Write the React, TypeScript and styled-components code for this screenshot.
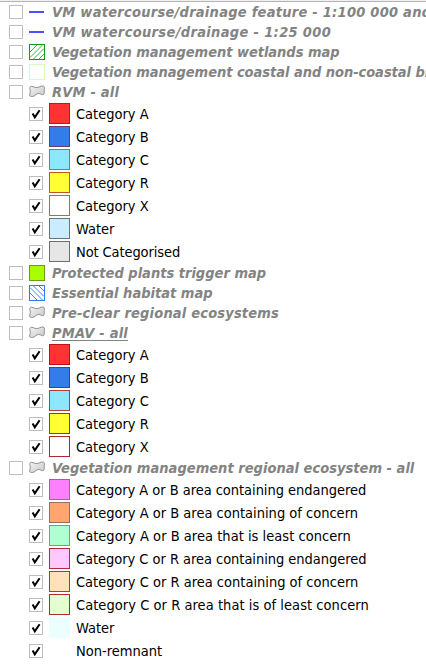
import React from "react";
import styled, { createGlobalStyle, css } from "styled-components";

const GlobalStyle = createGlobalStyle`
  body {
    margin: 0;
    background: #fff;
    overflow: hidden;
    font-family: "DejaVu Sans Condensed", "DejaVu Sans", sans-serif;
    font-stretch: condensed;
  }
`;

const Panel = styled.div`
  box-sizing: border-box;
  width: 426px;
  height: 664px;
  overflow: hidden;
  background: #fff;
`;

const TopEdge = styled.div`
  height: 1px;
  background: #f0f0f0;
  border-bottom: 1px solid #b4b4b4;
`;

const LayerRow = styled.div`
  display: flex;
  align-items: center;
  height: 20px;
  padding-left: 9px;
`;

const ClassRow = styled.div`
  display: flex;
  align-items: center;
  height: 23px;
  padding-left: 29px;
`;

const CheckBox = styled.span`
  display: flex;
  flex: none;
  box-sizing: border-box;
  width: 14px;
  height: 14px;
  margin-right: 6px;
  border: 1px solid #bdbdbd;
  background: #fff;
`;

const IconSlot = styled.span`
  display: flex;
  flex: none;
  width: 16px;
  height: 16px;
  margin-right: 7px;
`;

const Swatch = styled.span<{ $fill: string; $line: string }>`
  flex: none;
  box-sizing: border-box;
  width: 21px;
  height: 21px;
  margin-right: 6px;
  background: ${(p) => p.$fill};
  border: 1px solid ${(p) => p.$line};
`;

const LayerName = styled.span<{ $tracking: number; $underline?: boolean }>`
  font-size: 14.5px;
  font-weight: bold;
  font-style: italic;
  line-height: 20px;
  white-space: nowrap;
  color: #838383;
  letter-spacing: ${(p) => p.$tracking}px;
  ${(p) =>
    p.$underline &&
    css`
      text-decoration: underline;
      text-decoration-thickness: 1px;
      text-underline-offset: 2px;
      text-decoration-skip-ink: none;
    `}
`;

const ClassName = styled.span<{ $tracking: number }>`
  padding-top: 1px;
  font-size: 14.5px;
  line-height: 23px;
  white-space: nowrap;
  color: #000;
  letter-spacing: ${(p) => p.$tracking}px;
`;

type IconKind = "line" | "wetland" | "outline" | "polygon" | "plants" | "habitat";

function LayerIcon({ kind }: { kind: IconKind }) {
  return (
    <svg width="16" height="16" viewBox="0 0 16 16">
      {kind === "line" && <path d="M0 8H15" stroke="#4f4fff" strokeWidth="2" />}
      {kind === "wetland" && (
        <>
          <path d="M1 8L8 1M1 13.5L13.5 1M4.5 15L15 4.5M10 15L15 10" stroke="#45b045" strokeWidth="1" />
          <rect x=".5" y=".5" width="15" height="15" fill="none" stroke="#169616" />
        </>
      )}
      {kind === "outline" && <rect x=".5" y=".5" width="15" height="15" fill="#fff" stroke="#d4ffc0" />}
      {kind === "plants" && <rect x=".5" y=".5" width="15" height="15" fill="#a9ff00" stroke="#6a9c10" />}
      {kind === "habitat" && (
        <>
          <path d="M1 2.5L13.5 15M4.5 1L15 11.5M10 1L15 6M1 8L8 15" stroke="#3f86f5" strokeWidth="1" />
          <rect x=".5" y=".5" width="15" height="15" fill="none" stroke="#2f78ee" />
        </>
      )}
      {kind === "polygon" && (
        <>
          <defs>
            <linearGradient id="land" x1="0" y1="0" x2="1" y2="1">
              <stop offset="0" stopColor="#f4f4f4" />
              <stop offset="1" stopColor="#c8c8c8" />
            </linearGradient>
          </defs>
          <path
            d="M1.4 2.6C3 1.4 5.2 3.6 7.6 3.6C10 3.6 11.6 1.9 14 2C15.5 2.2 15.6 3.6 15.3 5.4C15.1 7.4 15.6 9.6 14.6 10.5C13.2 11.4 11.6 9.4 9.6 9.4C7.4 9.4 6 12.2 3.8 12.4C2 12.6 .6 12.4 .6 11C.6 9.6 1.6 8.8 1.4 7.2C1.2 5.6 .1 3.8 1.4 2.6Z"
            fill="url(#land)"
            stroke="#8f8f8f"
          />
        </>
      )}
    </svg>
  );
}

function Tick() {
  return (
    <svg width="12" height="12" viewBox="0 0 12 12">
      <path d="M2.6 5.6L4.8 9.3L9.6 2.2" fill="none" stroke="#000" strokeWidth="2" />
    </svg>
  );
}

interface Category {
  name: string;
  fill: string;
  line: string;
  tracking?: number;
}

interface Layer {
  name: string;
  icon: IconKind;
  tracking?: number;
  underline?: boolean;
  classes?: Category[];
}

const layers: Layer[] = [
  { name: "VM watercourse/drainage feature - 1:100 000 and", icon: "line", tracking: 0.25 },
  { name: "VM watercourse/drainage - 1:25 000", icon: "line", tracking: 0.33 },
  { name: "Vegetation management wetlands map", icon: "wetland", tracking: -0.04 },
  { name: "Vegetation management coastal and non-coastal bi", icon: "outline", tracking: -0.04 },
  {
    name: "RVM - all",
    icon: "polygon",
    tracking: 0.2,
    classes: [
      { name: "Category A", fill: "#ff3333", line: "#c4161c" },
      { name: "Category B", fill: "#337de8", line: "#713a68" },
      { name: "Category C", fill: "#8fe6ff", line: "#946d78" },
      { name: "Category R", fill: "#ffff33", line: "#b85c1c" },
      { name: "Category X", fill: "#ffffff", line: "#b96064" },
      { name: "Water", fill: "#c9ecff", line: "#66747c" },
      { name: "Not Categorised", fill: "#e6e6e6", line: "#6e6e6e", tracking: -0.1 },
    ],
  },
  { name: "Protected plants trigger map", icon: "plants" },
  { name: "Essential habitat map", icon: "habitat" },
  { name: "Pre-clear regional ecosystems", icon: "polygon", tracking: 0.18 },
  {
    name: "PMAV - all",
    icon: "polygon",
    underline: true,
    tracking: 0.2,
    classes: [
      { name: "Category A", fill: "#ff3333", line: "#b81418" },
      { name: "Category B", fill: "#337de8", line: "#8c2850" },
      { name: "Category C", fill: "#8fe6ff", line: "#b03c3c" },
      { name: "Category R", fill: "#ffff33", line: "#b02c1c" },
      { name: "Category X", fill: "#ffffff", line: "#b0282c" },
    ],
  },
  {
    name: "Vegetation management regional ecosystem - all",
    icon: "polygon",
    tracking: 0.02,
    classes: [
      { name: "Category A or B area containing endangered", fill: "#ff80ff", line: "#946a94", tracking: -0.04 },
      { name: "Category A or B area containing of concern", fill: "#ffa570", line: "#94705c" },
      { name: "Category A or B area that is least concern", fill: "#b0ffd2", line: "#789c88", tracking: 0.03 },
      { name: "Category C or R area containing endangered", fill: "#ffc8ff", line: "#b02c3c", tracking: -0.04 },
      { name: "Category C or R area containing of concern", fill: "#ffe1be", line: "#b83424" },
      { name: "Category C or R area that is of least concern", fill: "#e1ffcf", line: "#b02c24", tracking: 0.05 },
      { name: "Water", fill: "#ebffff", line: "#ebffff" },
      { name: "Non-remnant", fill: "#ffffff", line: "#ffffff" },
    ],
  },
];

export default function App() {
  return (
    <>
      <GlobalStyle />
      <Panel>
        <TopEdge />
        {layers.map((layer) => (
          <React.Fragment key={layer.name}>
            <LayerRow>
              <CheckBox />
              <IconSlot>
                <LayerIcon kind={layer.icon} />
              </IconSlot>
              <LayerName $tracking={layer.tracking ?? 0} $underline={layer.underline}>
                {layer.name}
              </LayerName>
            </LayerRow>
            {layer.classes?.map((c) => (
              <ClassRow key={c.name}>
                <CheckBox>
                  <Tick />
                </CheckBox>
                <Swatch $fill={c.fill} $line={c.line} />
                <ClassName $tracking={c.tracking ?? 0}>{c.name}</ClassName>
              </ClassRow>
            ))}
          </React.Fragment>
        ))}
      </Panel>
    </>
  );
}
